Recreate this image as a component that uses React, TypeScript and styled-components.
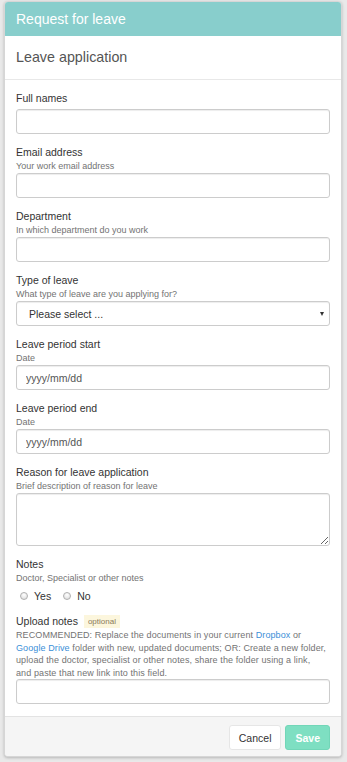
import React, { useState } from 'react';
import styled, { createGlobalStyle } from 'styled-components';

const GlobalStyle = createGlobalStyle`
  html, body {
    margin: 0;
    padding: 0;
    background: #e9e9e9;
    font-family: "Liberation Sans", Arial, Helvetica, sans-serif;
    color: #333;
  }
  * {
    box-sizing: border-box;
  }
`;

const Page = styled.div`
  padding: 1px 5px 7px 4px;
`;

const Card = styled.div`
  width: 338px;
  background: #fff;
  border: 1px solid #d6d6d6;
  border-radius: 4px;
  box-shadow: 0 1px 3px rgba(0, 0, 0, 0.22);
  overflow: hidden;
`;

const CardHeader = styled.div`
  height: 34px;
  background: #88cecc;
  color: #fff;
  font-size: 14px;
  padding: 0 11px 1px;
  display: flex;
  align-items: center;
`;

const SectionHeading = styled.div`
  height: 44px;
  padding: 0 11px 2px;
  border-bottom: 1px solid #e8e8e8;
  display: flex;
  align-items: center;
  font-size: 14.3px;
  color: #555;
`;

const FormBody = styled.div`
  padding: 11px 11px 12px;
`;

const FormGroup = styled.div<{ $last?: boolean }>`
  margin-bottom: ${p => (p.$last ? 0 : 11)}px;
`;

const Label = styled.label<{ $tight?: boolean }>`
  display: flex;
  align-items: center;
  gap: 6px;
  font-size: 10.5px;
  line-height: 15px;
  color: #333;
  margin-bottom: ${p => (p.$tight ? 0 : 3)}px;
`;

const Help = styled.div<{ $dense?: boolean }>`
  font-size: 9px;
  line-height: ${p => (p.$dense ? 12.6 : 13)}px;
  color: #737373;
  letter-spacing: ${p => (p.$dense ? 0.1 : 0)}px;
`;

const Link = styled.a`
  color: #3b8fd8;
  text-decoration: none;
`;

const Badge = styled.span`
  font-size: 8px;
  line-height: 13px;
  padding: 0 4px;
  background: #fcf6dd;
  color: #8a7a5a;
`;

const fieldBase = `
  display: block;
  width: 100%;
  border: 1px solid #cccccc;
  border-radius: 3px;
  background: #fff;
  box-shadow: inset 0 1px 1px rgba(0, 0, 0, 0.075);
  font-family: "Liberation Sans", Arial, Helvetica, sans-serif;
  font-size: 10.5px;
  color: #555;
  outline: none;
`;

const TextInput = styled.input`
  ${fieldBase}
  height: 25px;
  padding: 0 9px;

  &::placeholder {
    color: #555;
  }
`;

const TextArea = styled.textarea`
  ${fieldBase}
  height: 53px;
  padding: 5px 9px;
  resize: vertical;
`;

const SelectWrap = styled.div`
  position: relative;
`;

const Select = styled.select`
  ${fieldBase}
  height: 25px;
  padding: 0 12px;
  color: #333;
  appearance: none;
  -webkit-appearance: none;
`;

const Caret = styled.span`
  position: absolute;
  right: 6px;
  top: 11px;
  width: 0;
  height: 0;
  border-left: 2.5px solid transparent;
  border-right: 2.5px solid transparent;
  border-top: 4px solid #333;
  pointer-events: none;
`;

const RadioRow = styled.div`
  display: flex;
  align-items: center;
  height: 15px;
  margin-top: 3px;
  padding-left: 4px;
  gap: 12px;
`;

const RadioOption = styled.label`
  display: flex;
  align-items: center;
  gap: 6px;
  font-size: 10.5px;
  color: #333;
  cursor: pointer;
`;

const RadioDot = styled.span<{ $checked?: boolean }>`
  width: 8px;
  height: 8px;
  border-radius: 50%;
  border: 1px solid #b0b0b0;
  background: ${p =>
    p.$checked
      ? 'radial-gradient(circle, #4a7fc1 35%, #e8e8e8 45%)'
      : 'radial-gradient(circle at 50% 30%, #ffffff, #d9d9d9)'};
`;

const Footer = styled.div`
  background: #f5f5f5;
  border-top: 1px solid #e3e3e3;
  padding: 8px 11px 6px;
  display: flex;
  justify-content: flex-end;
  gap: 4px;
`;

const Button = styled.button<{ $variant?: 'primary' | 'default' }>`
  height: 25px;
  padding: 0 9px;
  border-radius: 3px;
  font-family: "Liberation Sans", Arial, Helvetica, sans-serif;
  font-size: 10.5px;
  cursor: pointer;
  background: ${p => (p.$variant === 'primary' ? '#7edfc2' : '#fff')};
  color: ${p => (p.$variant === 'primary' ? '#fff' : '#333')};
  font-weight: ${p => (p.$variant === 'primary' ? 700 : 400)};
  border: 1px solid ${p => (p.$variant === 'primary' ? '#72d6b8' : '#e6e6e6')};
`;

export default function App() {
  const [notes, setNotes] = useState<'yes' | 'no' | null>(null);

  return (
    <Page>
      <GlobalStyle />
      <Card>
        <CardHeader>Request for leave</CardHeader>
        <SectionHeading>Leave application</SectionHeading>

        <FormBody>
          <FormGroup>
            <Label>Full names</Label>
            <TextInput type="text" />
          </FormGroup>

          <FormGroup>
            <Label $tight>Email address</Label>
            <Help>Your work email address</Help>
            <TextInput type="text" />
          </FormGroup>

          <FormGroup>
            <Label $tight>Department</Label>
            <Help>In which department do you work</Help>
            <TextInput type="text" />
          </FormGroup>

          <FormGroup>
            <Label $tight>Type of leave</Label>
            <Help>What type of leave are you applying for?</Help>
            <SelectWrap>
              <Select defaultValue="">
                <option value="">Please select ...</option>
                <option value="annual">Annual leave</option>
                <option value="sick">Sick leave</option>
              </Select>
              <Caret />
            </SelectWrap>
          </FormGroup>

          <FormGroup>
            <Label $tight>Leave period start</Label>
            <Help>Date</Help>
            <TextInput type="text" placeholder="yyyy/mm/dd" />
          </FormGroup>

          <FormGroup>
            <Label $tight>Leave period end</Label>
            <Help>Date</Help>
            <TextInput type="text" placeholder="yyyy/mm/dd" />
          </FormGroup>

          <FormGroup>
            <Label $tight>Reason for leave application</Label>
            <Help>Brief description of reason for leave</Help>
            <TextArea />
          </FormGroup>

          <FormGroup>
            <Label $tight>Notes</Label>
            <Help>Doctor, Specialist or other notes</Help>
            <RadioRow>
              <RadioOption onClick={() => setNotes('yes')}>
                <RadioDot $checked={notes === 'yes'} />
                Yes
              </RadioOption>
              <RadioOption onClick={() => setNotes('no')}>
                <RadioDot $checked={notes === 'no'} />
                No
              </RadioOption>
            </RadioRow>
          </FormGroup>

          <FormGroup $last>
            <Label $tight>
              Upload notes <Badge>optional</Badge>
            </Label>
            <Help $dense>
              RECOMMENDED: Replace the documents in your current <Link href="#">Dropbox</Link> or
              <br />
              <Link href="#">Google Drive</Link> folder with new, updated documents; OR: Create a new folder,
              <br />
              upload the doctor, specialist or other notes, share the folder using a link,
              <br />
              and paste that new link into this field.
            </Help>
            <TextInput type="text" />
          </FormGroup>
        </FormBody>

        <Footer>
          <Button type="button">Cancel</Button>
          <Button type="button" $variant="primary">Save</Button>
        </Footer>
      </Card>
    </Page>
  );
}
